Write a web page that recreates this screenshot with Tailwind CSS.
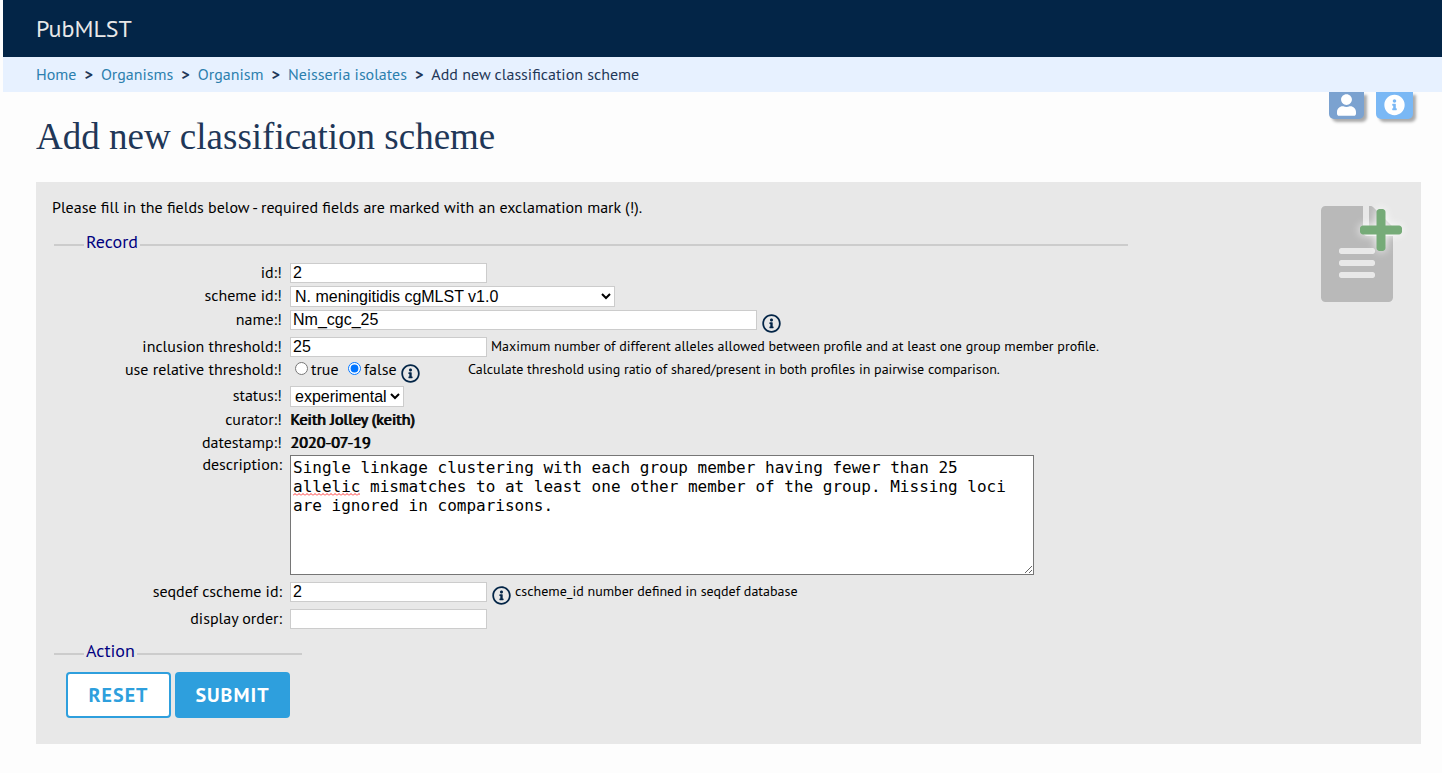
<!DOCTYPE html>
<html lang="en">

<head>
    <meta charset="UTF-8">
    <meta name="viewport" content="width=device-width, initial-scale=1.0">
    <script src="https://cdn.jsdelivr.net/npm/@tailwindcss/browser@4"></script>
    <title>Add new classification scheme - PubMLST</title>
</head>

<body class="bg-[#fdfdfd] pl-[3px] text-base text-black font-['PT_Sans','Noto_Sans',sans-serif]">
    <!-- Shared icons -->
    <svg class="hidden">
        <symbol id="info" viewBox="0 0 512 512">
            <path d="M256 8C119.043 8 8 119.083 8 256c0 136.997 111.043 248 248 248s248-111.003 248-248C504 119.083 392.957 8 256 8zm0 448c-110.532 0-200-89.431-200-200 0-110.495 89.472-200 200-200 110.491 0 200 89.471 200 200 0 110.53-89.431 200-200 200zm0-338c23.196 0 42 18.804 42 42s-18.804 42-42 42-42-18.804-42-42 18.804-42 42-42zm56 254c0 6.627-5.373 12-12 12h-88c-6.627 0-12-5.373-12-12v-24c0-6.627 5.373-12 12-12h12v-64h-12c-6.627 0-12-5.373-12-12v-24c0-6.627 5.373-12 12-12h64c6.627 0 12 5.373 12 12v100h12c6.627 0 12 5.373 12 12v24z" />
        </symbol>
    </svg>

    <header class="bg-[#032547] text-[#e8e8e8] h-[57px] px-[33px] flex items-center">
        <span class="text-2xl">PubMLST</span>
    </header>

    <!-- Breadcrumbs -->
    <nav class="bg-[#e7f1ff] text-[#1f3758] h-[35px] px-[33px] pb-0.5" aria-label="Breadcrumb">
        <ol class="flex items-center gap-2 h-full">
            <li><a href="#" class="text-[#2c7fae] hover:underline">Home</a></li>
            <li class="font-bold">&gt;</li>
            <li><a href="#" class="text-[#2c7fae] hover:underline">Organisms</a></li>
            <li class="font-bold">&gt;</li>
            <li><a href="#" class="text-[#2c7fae] hover:underline">Organism</a></li>
            <li class="font-bold">&gt;</li>
            <li><a href="#" class="text-[#2c7fae] hover:underline">Neisseria isolates</a></li>
            <li class="font-bold">&gt;</li>
            <li>Add new classification scheme</li>
        </ol>
    </nav>

    <div class="flex justify-between items-start pl-[33px] pr-[29px] h-[90px]">
        <h1 class="font-['Liberation_Serif',serif] text-[37px] leading-[90px] text-[#1f3758]">Add new classification scheme</h1>
        <div class="flex gap-3">
            <button type="button" aria-label="Account" class="bg-[#7ba2d0] w-[35px] h-[27px] pb-0.5 rounded-b-[5px] shadow-[3px_3px_3px_#aaa] flex items-center justify-center">
                <svg class="w-[19px] h-[22px] fill-white" viewBox="0 0 448 512">
                    <path d="M224 256c70.7 0 128-57.3 128-128S294.7 0 224 0 96 57.3 96 128s57.3 128 128 128zm89.6 32h-16.7c-22.2 10.2-46.9 16-72.9 16s-50.6-5.8-72.9-16h-16.7C60.2 288 0 348.2 0 422.4V464c0 26.5 21.5 48 48 48h352c26.5 0 48-21.5 48-48v-41.6c0-74.2-60.2-134.4-134.4-134.4z" />
                </svg>
            </button>
            <button type="button" aria-label="Help" class="bg-[#7ab8f5] w-[37px] h-[27px] pb-0.5 rounded-b-[5px] shadow-[3px_3px_3px_#aaa] flex items-center justify-center">
                <svg class="w-[21px] h-[22px] fill-white" viewBox="0 0 512 512">
                    <path d="M256 8C119.043 8 8 119.083 8 256c0 136.997 111.043 248 248 248s248-111.003 248-248C504 119.083 392.957 8 256 8zm0 110c23.196 0 42 18.804 42 42s-18.804 42-42 42-42-18.804-42-42 18.804-42 42-42zm56 254c0 6.627-5.373 12-12 12h-88c-6.627 0-12-5.373-12-12v-24c0-6.627 5.373-12 12-12h12v-64h-12c-6.627 0-12-5.373-12-12v-24c0-6.627 5.373-12 12-12h64c6.627 0 12 5.373 12 12v100h12c6.627 0 12 5.373 12 12v24z" />
                </svg>
            </button>
        </div>
    </div>

    <!-- Main Content -->
    <main class="bg-[#e8e8e8] ml-[33px] mr-[21px] pt-4 pb-[26px] pl-4 pr-[19px] flex justify-between items-start">
        <form class="min-w-0">
            <p class="leading-[18px]">Please fill in the fields below - required fields are marked with an exclamation mark (!).</p>

            <fieldset class="border-t-2 border-[#ccc] ml-0.5 mt-[17px] w-[1074px] max-w-full">
                <legend class="ml-[30px] px-0.5 pb-1.5 h-6 text-lg leading-[18px] text-[#000080]">Record</legend>
                <ul class="pt-1.5 leading-[18px]">
                    <li class="flex h-[23px]">
                        <label for="id" class="w-[228px] mr-2 text-right">id:!</label>
                        <input type="text" id="id" value="2" class="w-[197px] h-5 px-0.5 bg-white border border-[#ccc] font-['Liberation_Sans',sans-serif] text-base leading-none">
                    </li>
                    <li class="flex h-6">
                        <label for="scheme" class="w-[228px] mr-2 text-right">scheme id:!</label>
                        <select id="scheme" class="w-[325px] h-[21px] bg-white border border-[#ccc] font-['Liberation_Sans',sans-serif] text-base leading-none">
                            <option>N. meningitidis cgMLST v1.0</option>
                        </select>
                    </li>
                    <li class="flex h-[27px]">
                        <label for="name" class="w-[228px] mr-2 text-right">name:!</label>
                        <input type="text" id="name" value="Nm_cgc_25" class="w-[467px] h-5 px-0.5 bg-white border border-[#ccc] font-['Liberation_Sans',sans-serif] text-base leading-none">
                        <svg class="w-[19px] h-[19px] ml-[5px] mt-1 fill-[#032547]"><use href="#info" /></svg>
                    </li>
                    <li class="flex h-[23px]">
                        <label for="inclusion" class="w-[228px] mr-2 text-right">inclusion threshold:!</label>
                        <input type="text" id="inclusion" value="25" class="w-[197px] h-5 px-0.5 bg-white border border-[#ccc] font-['Liberation_Sans',sans-serif] text-base leading-none">
                        <span class="ml-1 text-sm leading-[18px]">Maximum number of different alleles allowed between profile and at least one group member profile.</span>
                    </li>
                    <li class="flex h-[26px]" role="radiogroup" aria-labelledby="relative">
                        <span id="relative" class="w-[228px] mr-2 text-right">use relative threshold:!</span>
                        <input type="radio" id="rel_true" name="relative" class="w-[13px] h-[13px] ml-[5px] mt-0.5">
                        <label for="rel_true" class="w-[37px] ml-[3px]">true</label>
                        <input type="radio" id="rel_false" name="relative" checked class="w-[13px] h-[13px] mt-0.5">
                        <label for="rel_false" class="w-[37px] ml-[3px]">false</label>
                        <svg class="w-[19px] h-[19px] mt-1 fill-[#032547]"><use href="#info" /></svg>
                        <span class="ml-12 text-sm leading-[18px]">Calculate threshold using ratio of shared/present in both profiles in pairwise comparison.</span>
                    </li>
                    <li class="flex h-6">
                        <label for="status" class="w-[228px] mr-2 text-right">status:!</label>
                        <select id="status" class="w-[114px] h-[21px] bg-white border border-[#ccc] font-['Liberation_Sans',sans-serif] text-base leading-none">
                            <option>experimental</option>
                        </select>
                    </li>
                    <li class="flex h-[23px]">
                        <span class="w-[228px] mr-2 text-right">curator:!</span>
                        <b class="font-normal [text-shadow:1px_0_0_#000]">Keith Jolley (keith)</b>
                    </li>
                    <li class="flex h-[22px]">
                        <span class="w-[228px] mr-2 text-right">datestamp:!</span>
                        <b class="font-normal [text-shadow:1px_0_0_#000]">2020-07-19</b>
                    </li>
                    <li class="flex mb-[7px]">
                        <label for="description" class="w-[228px] mr-2 text-right">description:</label>
                        <div class="relative">
                            <textarea id="description" spellcheck="false" class="block w-[744px] h-[120px] p-0.5 bg-white border border-[#767676] font-['DejaVu_Sans_Mono',monospace] text-base leading-[19px]">Single linkage clustering with each group member having fewer than 25 allelic mismatches to at least one other member of the group. Missing loci are ignored in comparisons.</textarea>
                            <!-- spelling underline -->
                            <svg class="absolute left-[3px] top-[38px] w-[67px] h-[3px]" aria-hidden="true">
                                <pattern id="wave" width="4" height="3" patternUnits="userSpaceOnUse">
                                    <path d="M0 2.500L2 .5L4 2.500" fill="none" stroke="#f33" />
                                </pattern>
                                <rect width="67" height="3" fill="url(#wave)" />
                            </svg>
                        </div>
                    </li>
                    <li class="flex h-[27px]">
                        <label for="seqdef" class="w-[228px] mr-2 text-right">seqdef cscheme id:</label>
                        <input type="text" id="seqdef" value="2" class="w-[197px] h-5 px-0.5 bg-white border border-[#ccc] font-['Liberation_Sans',sans-serif] text-base leading-none">
                        <svg class="w-[19px] h-[19px] ml-[5px] mt-1 fill-[#032547]"><use href="#info" /></svg>
                        <span class="ml-1 text-sm leading-[18px]">cscheme_id number defined in seqdef database</span>
                    </li>
                    <li class="flex">
                        <label for="order" class="w-[228px] mr-2 text-right">display order:</label>
                        <input type="text" id="order" class="w-[197px] h-5 px-0.5 bg-white border border-[#ccc] font-['Liberation_Sans',sans-serif] text-base leading-none">
                    </li>
                </ul>
            </fieldset>

            <fieldset class="border-t-2 border-[#ccc] ml-0.5 mt-[13px] w-[248px]">
                <legend class="ml-[30px] px-0.5 pb-1.5 h-6 text-lg leading-[18px] text-[#000080]">Action</legend>
                <div class="flex gap-1 pt-1.5 pl-3">
                    <button type="reset" class="w-[105px] h-[46px] shrink-0 rounded bg-white border-2 border-[#2e9fdd] text-[#2e9fdd] text-xl font-bold tracking-wider">RESET</button>
                    <button type="submit" class="w-[115px] h-[46px] shrink-0 rounded bg-[#2e9fdd] text-white text-xl font-bold tracking-wider">SUBMIT</button>
                </div>
            </fieldset>
        </form>

        <!-- New record icon -->
        <div class="relative w-[81px] h-24 mt-2 shrink-0">
            <svg class="w-[72px] h-24 fill-[#b9b9b9]" viewBox="0 0 384 512">
                <path d="M224 136V0H24C10.7 0 0 10.7 0 24v464c0 13.3 10.7 24 24 24h336c13.3 0 24-10.7 24-24V160H248c-13.2 0-24-10.8-24-24zm64 236c0 6.600-5.400 12-12 12H108c-6.600 0-12-5.400-12-12v-8c0-6.600 5.400-12 12-12h168c6.600 0 12 5.400 12 12v8zm0-64c0 6.600-5.400 12-12 12H108c-6.600 0-12-5.400-12-12v-8c0-6.600 5.400-12 12-12h168c6.600 0 12 5.400 12 12v8zm0-72v8c0 6.600-5.400 12-12 12H108c-6.600 0-12-5.400-12-12v-8c0-6.600 5.400-12 12-12h168c6.600 0 12 5.400 12 12zm96-114.100v6.100H256V0h6.100c6.400 0 12.500 2.500 17 7l97.900 98c4.500 4.500 7 10.600 7 16.900z" />
            </svg>
            <svg class="absolute right-0 top-0 w-[42px] h-12 fill-[#76ab78] drop-shadow-[0_0_5px_#fff]" viewBox="0 0 448 512">
                <path d="M416 208H272V64c0-17.670-14.330-32-32-32h-32c-17.670 0-32 14.330-32 32v144H32c-17.670 0-32 14.330-32 32v32c0 17.670 14.330 32 32 32h144v144c0 17.670 14.330 32 32 32h32c17.670 0 32-14.330 32-32V304h144c17.670 0 32-14.330 32-32v-32c0-17.670-14.330-32-32-32z" />
            </svg>
        </div>
    </main>
</body>

</html>
